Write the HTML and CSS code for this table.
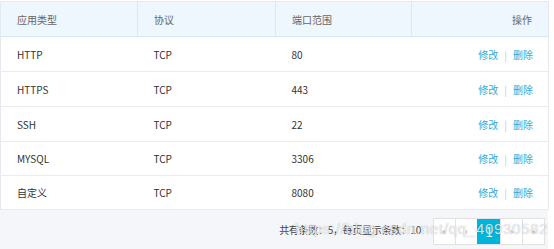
FILE: index.html
```html
<!DOCTYPE html>
<html lang="zh">
<head>
<meta charset="utf-8">
<link rel="stylesheet" href="styles.css">
</head>
<body>
<div class="page">
  <table class="grid">
    <colgroup>
      <col class="c1"><col class="c2"><col class="c3"><col class="c4">
    </colgroup>
    <thead>
      <tr><th>应用类型</th><th>协议</th><th>端口范围</th><th class="ops">操作</th></tr>
    </thead>
    <tbody>
      <tr><td>HTTP</td><td>TCP</td><td>80</td><td class="ops"><a>修改</a><span class="sep">|</span><a>删除</a></td></tr>
      <tr><td>HTTPS</td><td>TCP</td><td>443</td><td class="ops"><a>修改</a><span class="sep">|</span><a>删除</a></td></tr>
      <tr><td>SSH</td><td>TCP</td><td>22</td><td class="ops"><a>修改</a><span class="sep">|</span><a>删除</a></td></tr>
      <tr class="short"><td>MYSQL</td><td>TCP</td><td>3306</td><td class="ops"><a>修改</a><span class="sep">|</span><a>删除</a></td></tr>
      <tr class="short"><td>自定义</td><td>TCP</td><td>8080</td><td class="ops"><a>修改</a><span class="sep">|</span><a>删除</a></td></tr>
    </tbody>
  </table>
  <div class="footer">
    <span class="info">共有条数：5，每页显示条数：10</span>
    <div class="pager">
      <span class="pg">«</span><span class="pg">‹</span><span class="pg active">1</span><span class="pg">›</span><span class="pg">»</span>
    </div>
    <span class="watermark">https://blog.csdn.net/qq_40930582</span>
  </div>
</div>
</body>
</html>
```

FILE: styles.css
```css
html, body { margin: 0; padding: 0; background: #fff; }
body { font-family: "Noto Sans CJK SC", "Noto Sans", sans-serif; font-size: 10px; color: #333; }
.page { width: 548px; padding-top: 1px; }
.grid { width: 548px; border-collapse: collapse; table-layout: fixed; border: 1px solid #e6eaf0; border-bottom: none; }
.c1 { width: 137px; } .c2 { width: 138px; } .c3 { width: 136px; } .c4 { width: 137px; }
.grid th { height: 34px; padding: 0 0 0 16px; background: #eef6fe; color: #666; font-weight: normal; text-align: left; border: 1px solid #d7e8fa; border-top: none; }
.grid th:first-child { border-left: none; }
.grid th:last-child { border-right: none; }
.grid th.ops { text-align: right; padding: 0 16px 0 0; }
.grid td { height: 34px; padding: 0 0 0 16px; border-bottom: 1px solid #e8ebf0; color: #333; }
.grid tr.short td { height: 33px; }
.grid td.ops { text-align: right; padding: 0 15px 0 0; }
.grid a { color: #3aa6d6; }
.sep { color: #c8c8c8; margin: 0 6px; }
.footer { position: relative; height: 39px; background: #f5f6f9; display: flex; align-items: center; justify-content: flex-end; padding-right: 3px; margin-top: -1px; border-top: 1px solid #e8ebf0; }
.info { color: #444; margin-right: 12px; letter-spacing: -0.3px; }
.pager { display: flex; border: 1px solid #e2e2e2; background: #fff; height: 25px; margin-top: 3px; }
.pg { width: 21px; display: flex; align-items: center; justify-content: center; color: #999; border-left: 1px solid #e2e2e2; font-size: 9px; }
.pg:first-child { border-left: none; }
.pg.active { width: 22px; background: #00b5db; color: #fff; font-size: 13px; border-color: #00b5db; }
.watermark { position: absolute; left: 295px; top: 10px; font-family: "Liberation Sans", Arial, sans-serif; font-size: 15px; letter-spacing: 0.7px; color: rgba(255,255,255,0.75); text-shadow: 0 0 1px rgba(90,90,90,0.5); pointer-events: none; white-space: nowrap; }
```
